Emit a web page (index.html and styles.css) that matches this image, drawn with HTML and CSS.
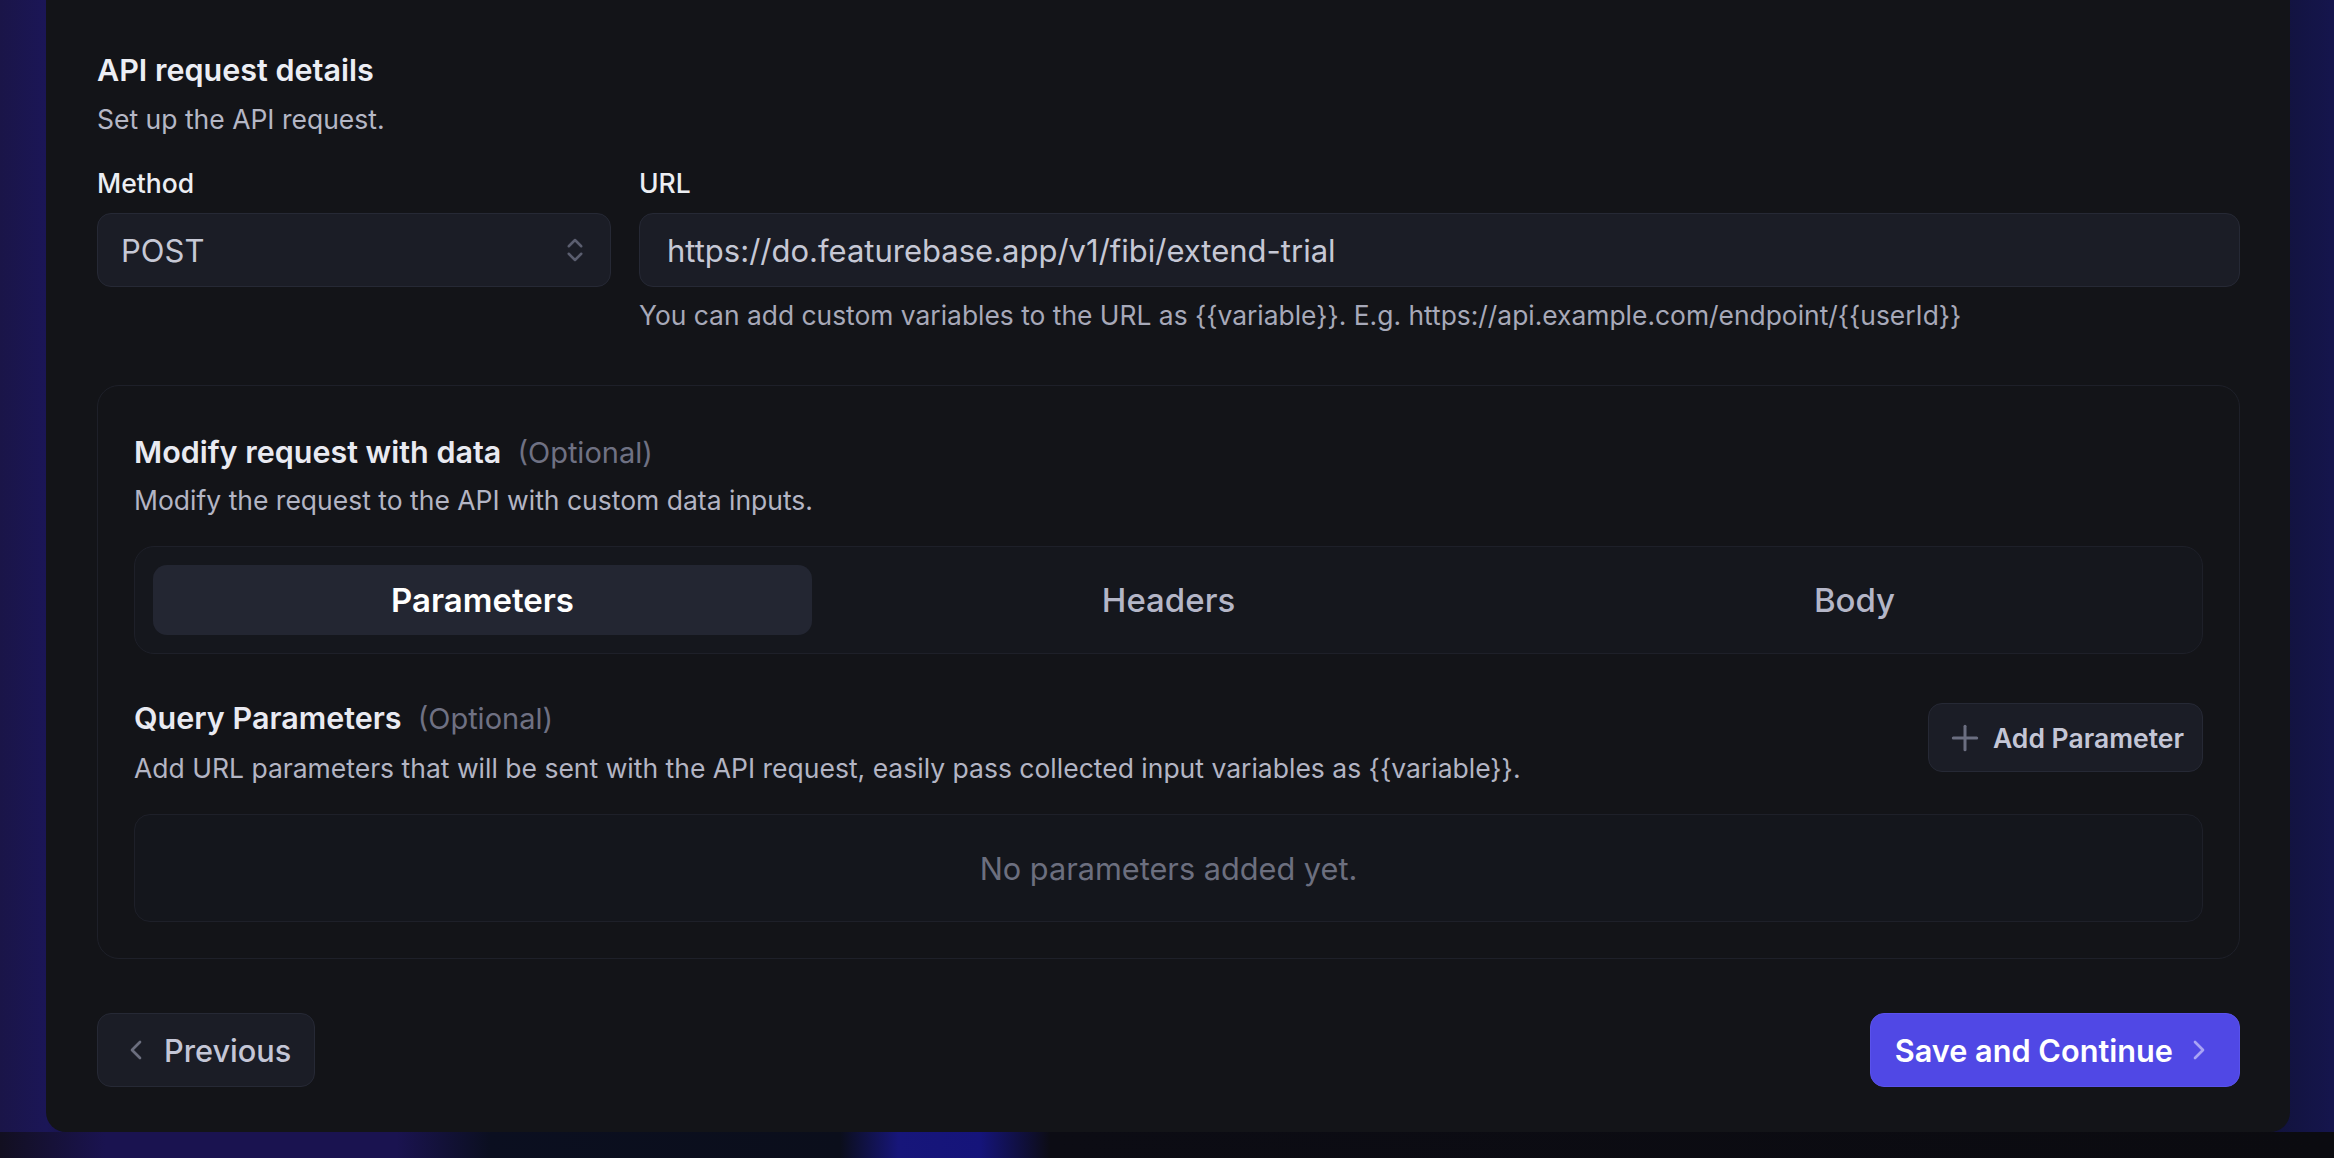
FILE: index.html
```html
<!DOCTYPE html>
<html lang="en">
  <head>
    <meta charset="utf-8">
    <title>API request details</title>
    <link rel="stylesheet" href="styles.css">
  </head>
  <body>

  <div class="panel">

    <h2 class="section-title">API request details</h2>
    <p class="section-desc">Set up the API request.</p>

    <div class="request-row">
      <div class="field">
        <label class="field-label">Method</label>
        <div class="select">
          <span>POST</span>
          <svg class="select-icon" width="30" height="30" viewBox="0 0 24 24" fill="none" stroke="currentColor" stroke-width="2" stroke-linecap="round" stroke-linejoin="round"><path d="m7 15 5 5 5-5"/><path d="m7 9 5-5 5 5"/></svg>
        </div>
      </div>
      <div class="field">
        <label class="field-label">URL</label>
        <div class="input">https://do.featurebase.app/v1/fibi/extend-trial</div>
        <p class="field-hint">You can add custom variables to the URL as {{variable}}. E.g. https://api.example.com/endpoint/{{userId}}</p>
      </div>
    </div>

    <div class="card">
      <h3 class="card-title">Modify request with data<span class="optional">(Optional)</span></h3>
      <p class="card-desc">Modify the request to the API with custom data inputs.</p>

      <div class="tabs">
        <button class="tab active">Parameters</button>
        <button class="tab">Headers</button>
        <button class="tab">Body</button>
      </div>

      <div class="params-head">
        <div class="params-text">
          <h4 class="card-title">Query Parameters<span class="optional">(Optional)</span></h4>
          <p class="card-desc">Add URL parameters that will be sent with the API request, easily pass collected input variables as {{variable}}.</p>
        </div>
        <button class="btn-add">
          <svg width="40" height="40" viewBox="0 0 24 24" fill="none" stroke="currentColor" stroke-width="1.8" stroke-linecap="round"><path d="M5 12h14"/><path d="M12 5v14"/></svg>
          Add Parameter
        </button>
      </div>

      <div class="empty">No parameters added yet.</div>
    </div>

    <div class="actions">
      <button class="btn btn-secondary">
        <svg width="32" height="32" viewBox="0 0 24 24" fill="none" stroke="currentColor" stroke-width="2" stroke-linecap="round" stroke-linejoin="round"><path d="m15 18-6-6 6-6"/></svg>
        Previous
      </button>
      <button class="btn btn-primary">
        Save and Continue
        <svg width="32" height="32" viewBox="0 0 24 24" fill="none" stroke="currentColor" stroke-width="2" stroke-linecap="round" stroke-linejoin="round"><path d="m9 18 6-6-6-6"/></svg>
      </button>
    </div>

  </div>

  </body>
</html>
```

FILE: styles.css
```css
html {
  height: 100%;
}
body {
  margin: 0;
  padding: 0;
  height: 1158px;
  overflow: hidden;
  font-family: Inter, "Noto Sans", sans-serif;
  color: #ecedf3;
  background-color: #0b0b10;
  background-image:
    /* strip below the panel: purple glow and a blue light beam */
    linear-gradient(to right, #120f20 0, #1a1350 4.5%, #1a1350 17%, #0b0f20 21%, #0b0e1b 36%, #17167a 38.5%, #15147a 42%, #0c0c14 45%, #0b0b10 100%),
    linear-gradient(to right, #1a1548 0, #1b1657 2%, #14123a 4%, #0b0b10 10%, #0b0b10 90%, #101233 96%, #15154d 100%);
  background-repeat: no-repeat;
  background-size: 100% 26px, 100% 100%;
  background-position: 0 1132px, 0 0;
}

button {
  font-family: inherit;
  cursor: pointer;
}

.panel {
  box-sizing: border-box;
  margin-left: 46px;
  width: 2244px;
  padding: 50px 50px 45px 51px;
  background: #131418;
  border-radius: 0 0 20px 20px;
}

.section-title {
  margin: 0;
  font-size: 30.5px;
  line-height: 40px;
  font-weight: 600;
  color: #eceef4;
}

.section-desc {
  margin: 11px 0 0;
  font-size: 26.5px;
  line-height: 36px;
  color: #b5b7c5;
}

.request-row {
  display: grid;
  grid-template-columns: 514px 1fr;
  gap: 28px;
  margin-top: 28px;
}

.field-label {
  display: block;
  font-size: 26.5px;
  line-height: 36px;
  font-weight: 500;
  color: #eceef3;
  margin-bottom: 12px;
}

.select,
.input {
  box-sizing: border-box;
  height: 74px;
  display: flex;
  align-items: center;
  background: #1b1d26;
  border: 1.5px solid #262935;
  border-radius: 14px;
  font-size: 31px;
  color: #c6c8d5;
}

.select {
  justify-content: space-between;
  padding: 0 20px 0 23px;
}

.select-icon {
  color: #5b5e6f;
}

.input {
  padding: 0 27px;
}

.field-hint {
  margin: 11px 0 0;
  font-size: 26.4px;
  line-height: 34px;
  color: #a7a9b9;
}

/* nested box with the tabs */
.card {
  margin-top: 53px;
  padding: 46px 36px 36px;
  border: 1px solid #1e2029;
  border-radius: 22px;
}

.card-title {
  margin: 0;
  font-size: 30.5px;
  line-height: 40px;
  font-weight: 600;
  color: #e9eaf1;
}

.optional {
  margin-left: 16px;
  font-size: 29px;
  line-height: 1;
  font-weight: 400;
  color: #6f7183;
}

.card-desc {
  margin: 10px 0 0;
  font-size: 26.5px;
  line-height: 36px;
  color: #b3b5c4;
}

.params-text .card-desc {
  margin-top: 12px;
}

.tabs {
  display: flex;
  gap: 27px;
  margin-top: 28px;
  padding: 18px;
  background: #15171d;
  border: 1px solid #1e2029;
  border-radius: 20px;
}

.tab {
  flex: 1;
  height: 70px;
  border: 0;
  border-radius: 14px;
  background: none;
  font-size: 33px;
  font-weight: 500;
  color: #b4b6c7;
}

.tab.active {
  background: #232632;
  color: #ffffff;
  font-weight: 600;
}

.params-head {
  display: flex;
  justify-content: space-between;
  align-items: flex-start;
  margin-top: 44px;
}

.btn-add {
  display: flex;
  align-items: center;
  gap: 8px;
  height: 69px;
  margin-top: 5px;
  padding: 0 18px 0 16px;
  background: #1b1d26;
  border: 1.5px solid #262935;
  border-radius: 14px;
  font-size: 26.5px;
  font-weight: 600;
  color: #c4c6d6;
}

.btn-add svg {
  color: #6b6e80;
}

.empty {
  margin-top: 28px;
  height: 108px;
  box-sizing: border-box;
  display: flex;
  align-items: center;
  justify-content: center;
  background: #14161c;
  border: 1.5px solid #1e2029;
  border-radius: 16px;
  font-size: 30.7px;
  color: #6c6f7f;
}

.actions {
  display: flex;
  justify-content: space-between;
  margin-top: 54px;
}

.btn {
  display: flex;
  align-items: center;
  height: 74px;
  border-radius: 14px;
  font-size: 30.7px;
}

.btn-secondary {
  gap: 12px;
  padding: 0 23px 0 22px;
  background: #1b1d26;
  border: 1.5px solid #262935;
  font-weight: 500;
  color: #c4c6d6;
}

.btn-secondary svg {
  color: #6b6e7e;
}

.btn-primary {
  gap: 10px;
  padding: 0 24px;
  background: #5048e5;
  border: 1.5px solid #5a52ec;
  font-weight: 600;
  color: #ffffff;
}

.btn-primary svg {
  color: #a9a4f5;
}
```
